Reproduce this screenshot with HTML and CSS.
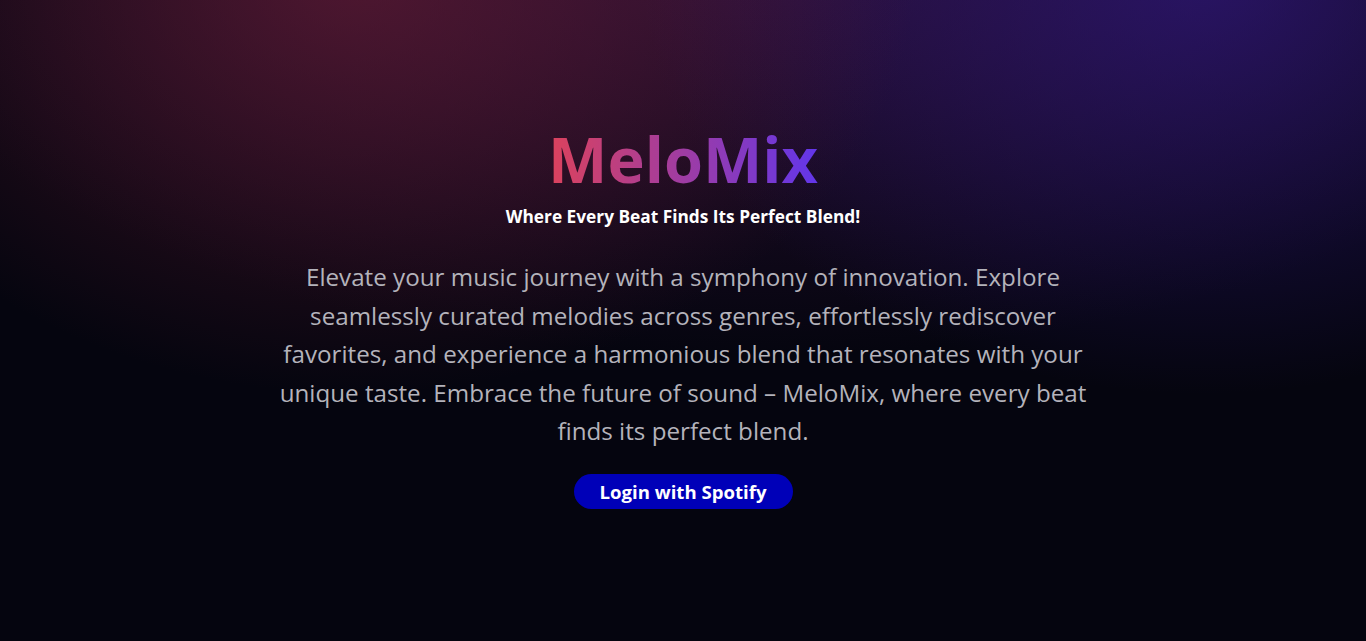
FILE: index.html
```html
<!DOCTYPE html>
<html lang="en">
<head>
<meta charset="utf-8">
<title>MeloMix</title>
<link rel="stylesheet" href="styles.css">
</head>
<body>
<main class="hero">
  <h1 class="brand">MeloMix</h1>
  <p class="tagline">Where Every Beat Finds Its Perfect Blend!</p>
  <p class="intro">Elevate your music journey with a symphony of innovation. Explore<br>
  seamlessly curated melodies across genres, effortlessly rediscover<br>
  favorites, and experience a harmonious blend that resonates with your<br>
  unique taste. Embrace the future of sound – MeloMix, where every beat<br>
  finds its perfect blend.</p>
  <a class="login" href="#">Login with Spotify</a>
</main>
</body>
</html>
```
FILE: styles.css
```css
html, body {
  margin: 0;
  height: 100%;
}
body {
  font-family: "Open Sans", "Noto Sans", sans-serif;
  background:
    radial-gradient(ellipse 560px 420px at 26% -4%, rgba(110, 30, 55, 0.62), rgba(110, 30, 55, 0) 100%),
    radial-gradient(ellipse 560px 420px at 88% -4%, rgba(50, 25, 135, 0.65), rgba(50, 25, 135, 0) 100%),
    radial-gradient(ellipse 900px 420px at 55% -10%, rgba(75, 25, 85, 0.55), rgba(75, 25, 85, 0) 100%),
    #05050f;
  color: #fff;
}
.hero {
  box-sizing: border-box;
  height: 100%;
  padding-bottom: 11px;
  display: flex;
  flex-direction: column;
  align-items: center;
  justify-content: center;
  text-align: center;
}
.brand {
  margin: 0;
  font-size: 63px;
  font-weight: 700;
  line-height: 1.2;
  background: linear-gradient(90deg, #dc425c 0%, #6236ea 100%);
  -webkit-background-clip: text;
  background-clip: text;
  color: transparent;
}
.tagline {
  margin: 9px 0 0;
  font-size: 17.3px;
  font-weight: 700;
  color: #ffffff;
}
.intro {
  margin: 30px 0 0;
  white-space: nowrap;
  font-size: 24.2px;
  line-height: 38.4px;
  color: #b4b3bb;
}
.login {
  margin-top: 24px;
  padding: 6px 26px;
  border-radius: 999px;
  background: #0000b8;
  color: #fff;
  font-size: 18.6px;
  font-weight: 700;
  text-decoration: none;
  line-height: 23px;
}
```
